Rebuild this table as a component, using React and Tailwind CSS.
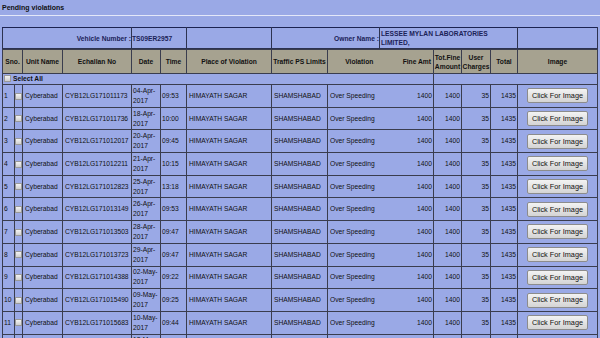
import React from "react";

const rows = [
  ["1", "CYB12LG171011173", "04-Apr-", "09:53"],
  ["2", "CYB12LG171011736", "18-Apr-", "10:00"],
  ["3", "CYB12LG171012017", "20-Apr-", "09:45"],
  ["4", "CYB12LG171012211", "21-Apr-", "10:15"],
  ["5", "CYB12LG171012823", "25-Apr-", "13:18"],
  ["6", "CYB12LG171013149", "26-Apr-", "09:53"],
  ["7", "CYB12LG171013503", "28-Apr-", "09:47"],
  ["8", "CYB12LG171013723", "29-Apr-", "09:47"],
  ["9", "CYB12LG171014388", "02-May-", "09:22"],
  ["10", "CYB12LG171015490", "09-May-", "09:25"],
  ["11", "CYB12LG171015683", "10-May-", "09:44"],
  ["12", "CYB12LG171015901", "12-May-", "09:40"],
];

const widths = [12, 8, 40, 69, 29, 26, 85, 56, 63, 43, 28, 29, 27, 80];

function Box() {
  return (
    <span className="inline-block w-[7px] h-[7px] border border-[#9a9a9a] bg-gradient-to-b from-[#f4f4f4] to-[#cfcfcf] align-middle" />
  );
}

const td = "border border-[#3a3d4e] px-px align-middle whitespace-nowrap overflow-visible";
const th = "border border-[#3a3d4e] bg-[#a6a290] font-bold text-center align-middle leading-[9px] whitespace-nowrap";

export default function App() {
  return (
    <div className="w-[600px] h-[338px] overflow-hidden bg-[#9aa9e6] text-[#111] text-[6.7px] font-['Liberation_Sans',Arial,sans-serif]">
      <div className="h-[15px] pl-[2px] pt-[3px] font-bold leading-[9px] text-[7px]">Pending violations</div>
      <div className="h-px bg-[#e3e7f8]" />
      <div className="h-[11px]" />

      <table className="ml-[2px] w-[595px] table-fixed border-collapse">
        <colgroup>
          {[129, 55, 85, 108, 138, 80].map((w, i) => (
            <col key={i} style={{ width: w }} />
          ))}
        </colgroup>
        <tbody>
          <tr className="h-[21px] font-bold text-[#1b2257] leading-[9px]">
            <td className="border border-[#2d3350] border-t-[#1c2350] text-right align-middle whitespace-nowrap">Vehicle Number :</td>
            <td className="border border-[#2d3350] border-t-[#1c2350] align-middle whitespace-nowrap">TS09ER2957</td>
            <td className="border border-[#2d3350] border-t-[#1c2350]" />
            <td className="border border-[#2d3350] border-t-[#1c2350] text-right align-middle whitespace-nowrap">Owner Name :</td>
            <td className="border border-[#2d3350] border-t-[#1c2350] align-middle pl-px">
              LESSEE MYLAN LABORATORIES
              <br />
              LIMITED,
            </td>
            <td className="border border-[#2d3350] border-t-[#1c2350]" />
          </tr>
        </tbody>
      </table>

      <table className="ml-[2px] w-[595px] table-fixed border-collapse">
        <colgroup>
          {widths.map((w, i) => (
            <col key={i} style={{ width: w }} />
          ))}
        </colgroup>
        <tbody>
          <tr className="h-[24px]">
            <td colSpan={2} className={th}>Sno.</td>
            <td className={th}>Unit Name</td>
            <td className={th}>Echallan No</td>
            <td className={th}>Date</td>
            <td className={th}>Time</td>
            <td className={th}>Place of Violation</td>
            <td className={th}>Traffic PS Limits</td>
            <td className={th + " border-r-0"}>Violation</td>
            <td className={th + " border-l-0 text-right pr-[2px]"}>Fine Amt</td>
            <td className={th}>Tot.Fine<br />Amount</td>
            <td className={th}>User<br />Charges</td>
            <td className={th}>Total</td>
            <td className={th}>Image</td>
          </tr>
          <tr className="h-[11px]">
            <td colSpan={10} className="border border-[#3a3d4e] px-px align-middle font-bold leading-[9px]">
              <span className="inline-flex items-center gap-[2px]">
                <Box />
                Select All
              </span>
            </td>
            <td colSpan={4} className="border border-[#3a3d4e]" />
          </tr>
          {rows.map(([n, ec, d, t]) => (
            <tr key={n} className="h-[22.7px] leading-[10px]">
              <td className="border border-[#3a3d4e] pl-px align-middle">{n}</td>
              <td className="border border-[#3a3d4e] text-center align-middle">
                <Box />
              </td>
              <td className={td + " pl-[2px]"}>Cyberabad</td>
              <td className={td + " pl-[2px]"}>{ec}</td>
              <td className={td}>
                {d}
                <br />
                2017
              </td>
              <td className={td}>{t}</td>
              <td className={td + " pl-[2px]"}>HIMAYATH SAGAR</td>
              <td className={td + " pl-[2px]"}>SHAMSHABAD</td>
              <td className={td + " border-r-0 pl-[2px]"}>Over Speeding</td>
              <td className={td + " border-l-0 text-right"}>1400</td>
              <td className={td + " text-right"}>1400</td>
              <td className={td + " text-right"}>35</td>
              <td className={td + " text-right"}>1435</td>
              <td className={td + " text-center"}>
                <button className="w-[61px] h-[15px] rounded-[2px] border border-[#8c8c8c] bg-gradient-to-b from-[#f3f3f3] to-[#d4d4d4] text-[7.3px] text-[#111] leading-none">
                  Click For Image
                </button>
              </td>
            </tr>
          ))}
        </tbody>
      </table>
    </div>
  );
}
